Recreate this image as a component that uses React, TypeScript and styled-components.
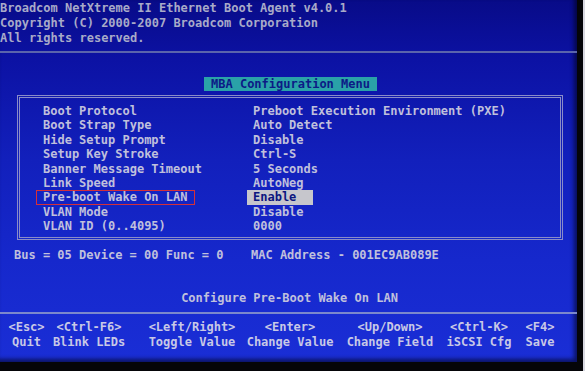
import { Fragment } from 'react';
import styled, { createGlobalStyle } from 'styled-components';

const GlobalStyle = createGlobalStyle`
  html, body {
    margin: 0;
    padding: 0;
    background: #000;
  }
`;

const Frame = styled.div`
  width: 585px;
  height: 371px;
  overflow: hidden;
  display: flex;
  background: #050508;
  border-right: 2px solid #d8d8e0;
  box-sizing: border-box;
`;

const Screen = styled.div`
  width: 577px;
  height: 362px;
  flex-shrink: 0;
  display: flex;
  flex-direction: column;
  background: linear-gradient(180deg, #080b88 0px, #0c12a4 60px, #1220bc 160px, #1628cc 260px, #1a2ed6 362px);
  font-family: "DejaVu Sans Mono", "Liberation Mono", monospace;
  font-weight: bold;
  font-size: 12px;
  color: #c0c0dc;
  white-space: pre;
  box-shadow: inset -3px -3px 4px rgba(0, 0, 20, 0.6);
`;

const Header = styled.div`
  padding-top: 1px;
  line-height: 15px;
  color: #a8aac8;
`;

const Rule = styled.div<{ $top: number; $color: string }>`
  height: 2px;
  margin-top: ${p => p.$top}px;
  background: ${p => p.$color};
`;

const TitleRow = styled.div`
  margin-top: 24px;
  display: flex;
  justify-content: center;
  padding-left: 4px;
`;

const Title = styled.div`
  background: #2aa2a8;
  color: #0c1a86;
  line-height: 14px;
  padding: 0 7px;
`;

const MenuBox = styled.div`
  margin-top: 4px;
  margin-left: 17px;
  width: 546px;
  height: 145px;
  box-sizing: border-box;
  border: 3px double #8a8cc8;
  padding: 6px 0 0 23px;
  display: grid;
  grid-template-columns: 210px 1fr;
  grid-auto-rows: 14.4px;
  line-height: 14.4px;
  align-content: start;
`;

const Label = styled.div``;

const Value = styled.div``;

const Marked = styled.span`
  margin-left: -7px;
  padding: 0 6px;
  border: 1px solid #d4303a;
  display: inline-block;
  line-height: 12.4px;
`;

const Selected = styled.span`
  margin-left: -6px;
  padding: 0 17px 0 6px;
  background: #c6c6cc;
  color: #0c1680;
  display: inline-block;
`;

const InfoRow = styled.div`
  margin-top: 8px;
  line-height: 15px;
  display: flex;
  padding-left: 14px;
`;

const InfoCell = styled.div<{ $width?: number }>`
  width: ${p => (p.$width ? `${p.$width}px` : 'auto')};
`;

const Status = styled.div`
  margin-top: 28px;
  line-height: 14px;
  text-align: center;
  padding-left: 2px;
`;

const Legend = styled.div`
  margin-top: 6px;
  display: grid;
  grid-template-columns: 49px 80px 126px 70px 130px 48px 74px;
  line-height: 15px;
  color: #c8c8e6;
`;

const Key = styled.div<{ $shift?: number }>`
  display: flex;
  flex-direction: column;
  align-items: center;
  transform: translateX(${p => p.$shift ?? 0}px);
`;

const rows: [string, string][] = [
  ['Boot Protocol', 'Preboot Execution Environment (PXE)'],
  ['Boot Strap Type', 'Auto Detect'],
  ['Hide Setup Prompt', 'Disable'],
  ['Setup Key Stroke', 'Ctrl-S'],
  ['Banner Message Timeout', '5 Seconds'],
  ['Link Speed', 'AutoNeg'],
  ['Pre-boot Wake On LAN', 'Enable'],
  ['VLAN Mode', 'Disable'],
  ['VLAN ID (0..4095)', '0000'],
];

const keys: { key: string; action: string; shift?: number }[] = [
  { key: '<Esc>', action: 'Quit', shift: 2 },
  { key: '<Ctrl-F6>', action: 'Blink LEDs' },
  { key: '<Left/Right>', action: 'Toggle Value' },
  { key: '<Enter>', action: 'Change Value' },
  { key: '<Up/Down>', action: 'Change Field' },
  { key: '<Ctrl-K>', action: 'iSCSI Cfg' },
  { key: '<F4>', action: 'Save' },
];

const ACTIVE = 'Pre-boot Wake On LAN';

export default function App() {
  return (
    <>
      <GlobalStyle />
      <Frame>
        <Screen>
          <Header>
            <div>Broadcom NetXtreme II Ethernet Boot Agent v4.0.1</div>
            <div>Copyright (C) 2000-2007 Broadcom Corporation</div>
            <div>All rights reserved.</div>
          </Header>
          <Rule $top={5} $color="#5a64ac" />
          <TitleRow>
            <Title>MBA Configuration Menu</Title>
          </TitleRow>
          <MenuBox>
            {rows.map(([label, value]) => (
              <Fragment key={label}>
                <Label>{label === ACTIVE ? <Marked>{label}</Marked> : label}</Label>
                <Value>{label === ACTIVE ? <Selected>{value}</Selected> : value}</Value>
              </Fragment>
            ))}
          </MenuBox>
          <InfoRow>
            <InfoCell $width={237}>Bus = 05 Device = 00 Func = 0</InfoCell>
            <InfoCell>MAC Address - 001EC9AB089E</InfoCell>
          </InfoRow>
          <Status>Configure Pre-Boot Wake On LAN</Status>
          <Rule $top={7} $color="#7c88cc" />
          <Legend>
            {keys.map(k => (
              <Key key={k.key} $shift={k.shift}>
                <div>{k.key}</div>
                <div>{k.action}</div>
              </Key>
            ))}
          </Legend>
        </Screen>
      </Frame>
    </>
  );
}
